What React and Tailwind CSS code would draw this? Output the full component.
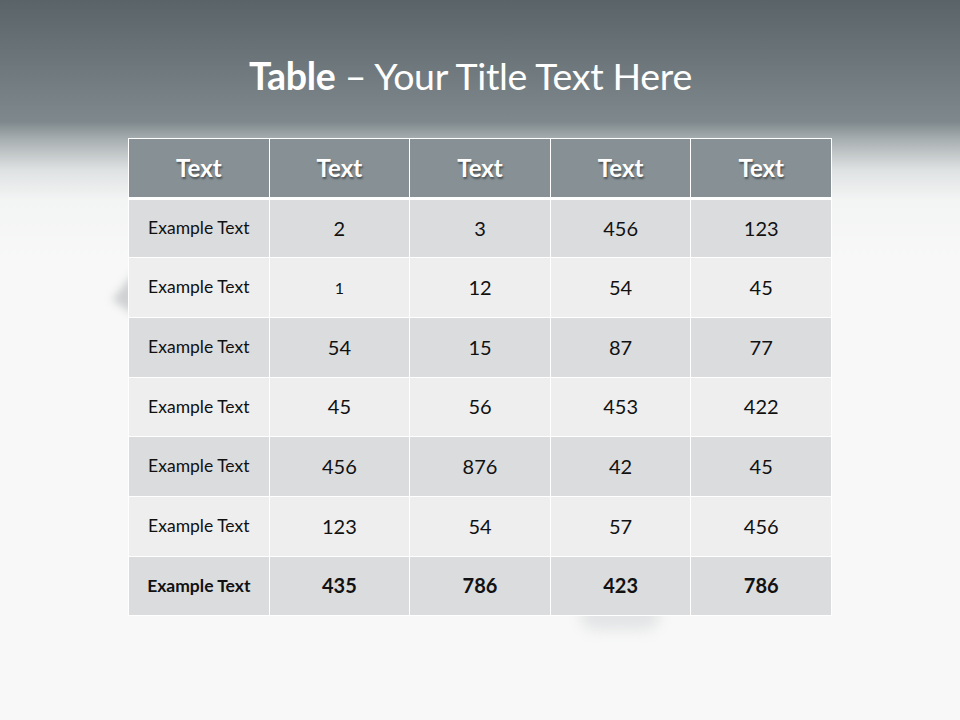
import React from "react";

const rows = [
  ["Example Text", "2", "3", "456", "123"],
  ["Example Text", "1", "12", "54", "45"],
  ["Example Text", "54", "15", "87", "77"],
  ["Example Text", "45", "56", "453", "422"],
  ["Example Text", "456", "876", "42", "45"],
  ["Example Text", "123", "54", "57", "456"],
];
const totals = ["Example Text", "435", "786", "423", "786"];
const heights = ["h-[57px]", "h-[59px]", "h-[59px]", "h-[58px]", "h-[59px]", "h-[59px]"];

const App = () => {
  return (
    <div
      className="relative w-[960px] h-[720px] flex flex-col items-center overflow-hidden bg-[linear-gradient(to_bottom,#5a6367_0px,#7f898d_122px,#a9b0b2_140px,#dfe2e3_170px,#f3f4f4_200px,#f8f8f8_260px)]"
      style={{ fontFamily: "Lato, 'Open Sans', sans-serif" }}
    >
      {/* faint decorative shapes behind the table */}
      <div className="absolute left-[106px] top-[270px] w-[30px] h-[46px] blur-[4px] opacity-50">
        <div className="w-full h-full bg-[#a4a8ab] [clip-path:polygon(100%_0,100%_100%,20%_65%)]" />
      </div>
      <div className="absolute left-[580px] top-[600px] w-[80px] h-[30px] rounded-full bg-[#c4c7ca] opacity-40 blur-[7px]" />

      {/* title */}
      <h1 className="mt-[53px] mr-[19px] h-[46px] text-[37.5px] leading-[46px] text-white tracking-[-0.3px]">
        <span className="font-bold">Table</span> – Your Title Text Here
      </h1>

      {/* table */}
      <div className="relative mt-[39px] w-[704px] border border-white bg-white">
        <div className="grid grid-cols-5 gap-x-px">
          {["Text", "Text", "Text", "Text", "Text"].map((t, i) => (
            <div
              key={i}
              className="h-[58px] flex items-center justify-center bg-[#879195] text-white font-bold text-[24px] [text-shadow:1px_2px_2px_rgba(0,0,0,0.45)]"
            >
              {t}
            </div>
          ))}
        </div>
        <div className="h-[3px] bg-white" />
        {rows.map((r, ri) => (
          <div key={ri} className="grid grid-cols-5 gap-x-px border-b border-white">
            {r.map((c, ci) => (
              <div
                key={ci}
                className={`${heights[ri]} flex items-center justify-center text-[#111] ${
                  ri % 2 === 0 ? "bg-[#dbdcde]" : "bg-[#eeeeee]"
                } ${ci === 0 ? "text-[17.5px]" : c === "1" ? "text-[16px]" : "text-[20px] pb-[2px]"}`}
              >
                {c}
              </div>
            ))}
          </div>
        ))}
        <div className="grid grid-cols-5 gap-x-px">
          {totals.map((c, ci) => (
            <div
              key={ci}
              className={`h-[58px] flex items-center justify-center bg-[#dbdcde] text-[#111] font-bold ${
                ci === 0 ? "text-[17.5px]" : "text-[20px] pb-[2px]"
              }`}
            >
              {c}
            </div>
          ))}
        </div>
      </div>
    </div>
  );
};

export default App;
